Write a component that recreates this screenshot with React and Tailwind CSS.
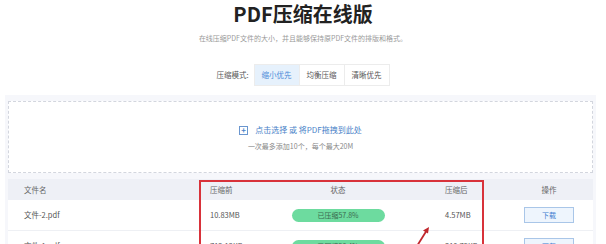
const rows = [
  { name: "文件-2.pdf", before: "10.83MB", ratio: "已压缩57.8%", after: "4.57MB" },
  { name: "文件-1.pdf", before: "712.12KB", ratio: "已压缩56.4%", after: "310.75KB" },
];

const modes = ["缩小优先", "均衡压缩", "清晰优先"];

export default function App() {
  return (
    <div className="w-[606px] h-[244px] overflow-hidden bg-white font-['Noto_Sans_CJK_SC','Noto_Sans',sans-serif]">
      <h1 className="pt-[1px] text-center text-[20px] leading-[26px] font-bold text-[#222]">PDF压缩在线版</h1>
      <p className="mt-[6px] text-center text-[7px] leading-[10px] text-[#9a9a9a]">
        在线压缩PDF文件的大小，并且能够保持原PDF文件的排版和格式。
      </p>

      <div className="mt-[21px] flex h-[22px] items-center justify-center text-[7.5px] text-[#555]">
        <span className="mr-[5px]">压缩模式:</span>
        <div className="flex h-full border border-[#ececec]">
          {modes.map((m, i) => (
            <button
              key={m}
              type="button"
              className={
                i === 0
                  ? "w-[44px] h-full bg-[#e6f1fc] text-[#4a89d8]"
                  : "w-[45px] h-full border-l border-[#ececec] bg-white text-[#555]"
              }
            >
              {m}
            </button>
          ))}
        </div>
      </div>

      <div className="mt-[9px] ml-[5px] w-[591px] h-[160px] bg-[#f6f7fb] px-[3px] pt-[6px]">
        <div className="flex h-[72px] flex-col items-center border border-dashed border-[#d3d6de] bg-white pt-[22px]">
          <div className="flex h-[12px] items-center gap-[7px] text-[8px] text-[#4a82c8]">
            <span className="flex h-[9px] w-[9px] items-center justify-center border border-[#6a96cf] text-[8px] leading-none font-bold">+</span>
            <span>点击选择 或 将PDF拖拽到此处</span>
          </div>
          <p className="mt-[5px] text-[7px] leading-[10px] text-[#888]">一次最多添加10个，每个最大20M</p>
        </div>

        <div className="relative mt-[6px]">
          <div className="grid h-[21px] grid-cols-[191px_83px_112px_111px_88px] items-center bg-[#eef0f6] text-[7.5px] text-[#666]">
            <span className="pl-[16px]">文件名</span>
            <span className="pl-[11px]">压缩前</span>
            <span className="text-center">状态</span>
            <span className="pl-[51px]">压缩后</span>
            <span className="text-center">操作</span>
          </div>
          {rows.map((r) => (
            <div
              key={r.name}
              className="grid h-[31px] grid-cols-[191px_83px_112px_111px_88px] items-center border-b border-[#eef0f4] bg-white text-[7.5px] text-[#555]"
            >
              <span className="pl-[16px]">{r.name}</span>
              <span className="pl-[11px]">{r.before}</span>
              <div className="flex justify-center">
                <span className="flex h-[13px] w-[93px] items-center justify-center rounded-full bg-[#6ddb9f] text-[7px] text-[#3b6b4f]">
                  {r.ratio}
                </span>
              </div>
              <span className="pl-[51px]">{r.after}</span>
              <div className="flex justify-center">
                <button type="button" className="h-[16px] w-[50px] border border-[#a9c6e8] bg-[#eef5fd] text-[7px] text-[#3f7fd0]">
                  下载
                </button>
              </div>
            </div>
          ))}

          <div className="pointer-events-none absolute left-[191px] top-[1px] h-[80px] w-[285px] border-2 border-[#d8323a]" />
          <svg className="pointer-events-none absolute left-[404px] top-[46px]" width="20" height="22" viewBox="0 0 20 22">
            <path d="M5 21 L15 5" stroke="#c0262c" strokeWidth="1.8" fill="none" />
            <path d="M17 2 L11 5.5 L16 8.5 Z" fill="#c0262c" />
          </svg>
        </div>
      </div>
    </div>
  );
}
